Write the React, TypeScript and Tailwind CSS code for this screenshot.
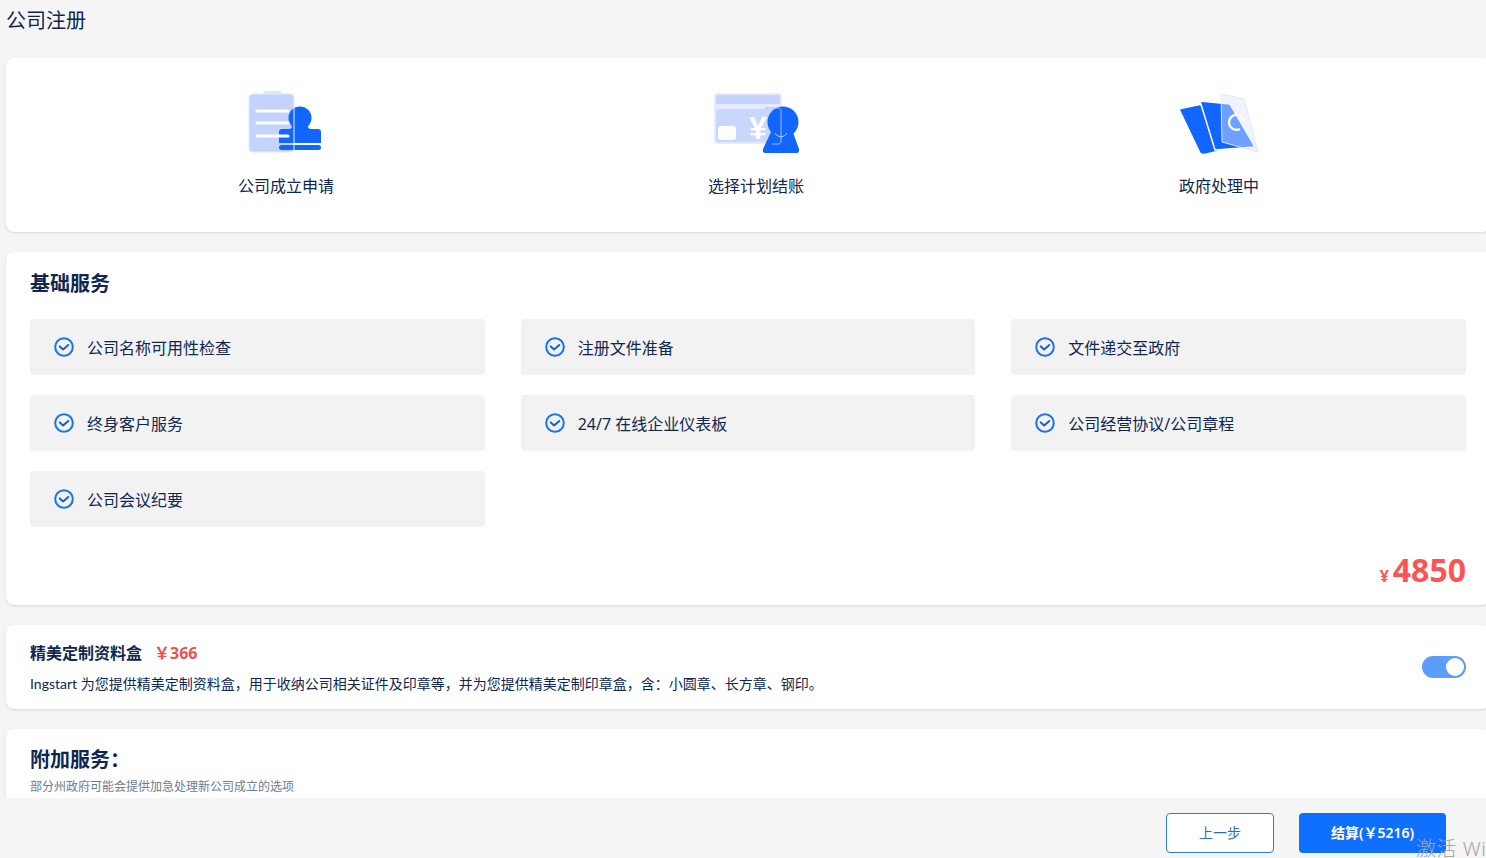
import { useState } from "react";

const basics = [
  "公司名称可用性检查",
  "注册文件准备",
  "文件递交至政府",
  "终身客户服务",
  "24/7 在线企业仪表板",
  "公司经营协议/公司章程",
  "公司会议纪要",
];

const CheckIcon = () => (
  <svg width="20" height="20" viewBox="0 0 20 20" fill="none" className="shrink-0">
    <circle cx="10" cy="10" r="8.8" stroke="#1a73e8" strokeWidth="2" />
    <path d="M5.8 9.4l3.3 3 5.2-4.4" stroke="#1d5fbf" strokeWidth="2" strokeLinecap="round" strokeLinejoin="round" />
  </svg>
);

const ApplyIcon = () => (
  <svg width="80" height="66" viewBox="0 0 80 66">
    <rect x="17" y="1" width="19" height="6" rx="3" fill="#dbe4ff" />
    <rect x="3" y="4" width="45" height="58" rx="4" fill="#c3d3fd" stroke="#e2e9ff" />
    <circle cx="54" cy="28" r="11.500" fill="#1166ff" />
    <path d="M46 33h16v3c0 2 1 3 3 3h7c2 0 3 1 3 3v11H33V42c0-2 1-3 3-3h7c2 0 3-1 3-3z" fill="#1166ff" />
    <rect x="33" y="55" width="42" height="5" rx="2.500" fill="#1166ff" />
    <path d="M48 16v44" stroke="#e8eeff" strokeWidth="1" />
    <path d="M11 21h31M11 33h31M11 46h31" stroke="#fff" strokeWidth="3" strokeLinecap="round" />
  </svg>
);

const PlanIcon = () => (
  <svg width="90" height="66" viewBox="0 0 90 66">
    <rect x="3" y="3" width="68" height="51" rx="4" fill="#e4eaff" />
    <rect x="5" y="5" width="64" height="9" rx="2" fill="#c3d3fd" />
    <rect x="5" y="19" width="64" height="33" rx="2" fill="#c9d7fe" />
    <rect x="7" y="36" width="18" height="14" rx="3" fill="#fff" />
    <circle cx="72" cy="32" r="15.500" fill="#1166ff" />
    <path d="M60 42h22l2 6 4 11c.5 2-.5 4-2 4H54c-2 0-2.500-2-2-4z" fill="#1166ff" />
    <text x="38" y="49" fontSize="32" fontWeight="700" fill="#fff" fontFamily="Liberation Sans, sans-serif">¥</text>
    <path d="M54 18h13c2 0 3 1 3 3v30c0 2-1 3-3 3h-6" stroke="#9dbbff" strokeWidth="1" fill="none" />
    <path d="M64 43c3 5 9 5 12 0" stroke="#cfdcff" strokeWidth="1" fill="none" />
  </svg>
);

const GovIcon = () => (
  <svg width="80" height="66" viewBox="0 0 80 66">
    <path d="M2 20l19-4 17 44-13 3c-1 0-2 0-3-1z" fill="#1166ff" stroke="#1166ff" strokeWidth="1.500" strokeLinejoin="round" />
    <path d="M21 11l30 3 25 43-40 3z" fill="#1166ff" stroke="#fff" strokeWidth="1.500" strokeLinejoin="round" />
    <path d="M42 4l23 5 14 53-36-10z" fill="#dfe7ff" fillOpacity="0.45" stroke="#e0e8ff" strokeWidth="1" />
    <path d="M59 25a7.500 7.500 0 1 0 2 14" stroke="#fff" strokeWidth="2.200" fill="none" />
    <path d="M62 26l3 5.500-1 6" stroke="#fff" strokeWidth="1.800" strokeDasharray="1.500 1.500" fill="none" />
  </svg>
);

const steps = [
  { label: "公司成立申请", icon: <ApplyIcon /> },
  { label: "选择计划结账", icon: <PlanIcon /> },
  { label: "政府处理中", icon: <GovIcon /> },
];

export default function App() {
  const [boxOn, setBoxOn] = useState(true);

  return (
    <div
      className="h-[858px] w-[1486px] overflow-hidden bg-[#f5f5f5] text-[#0f2750] relative"
      style={{ fontFamily: '"Noto Sans", "Noto Sans CJK SC", sans-serif' }}
    >
      <div className="h-[798px] overflow-hidden">
        <div className="h-[58px] pl-[6px] pt-[8px] text-[20px] leading-[26px]">公司注册</div>

        <div className="ml-[6px] w-[1484px] flex flex-col gap-5">
          <div className="h-[174px] bg-white rounded-lg shadow-sm px-[45px] flex justify-around">
            {steps.map((s) => (
              <div key={s.label} className="flex flex-col items-center pt-[32px] last:translate-x-px">
                <div className="h-[66px] flex items-center justify-center">{s.icon}</div>
                <div className="mt-[18px] text-base leading-[24px]">{s.label}</div>
              </div>
            ))}
          </div>

          <div className="h-[353px] bg-white rounded-lg shadow-sm px-6 pt-[18px]">
            <h2 className="text-[20px] leading-[28px] font-bold">基础服务</h2>
            <div className="mt-[21px] grid grid-cols-3 gap-x-9 gap-y-5">
              {basics.map((b) => (
                <div key={b} className="h-14 bg-[#f2f2f2] rounded flex items-center gap-[13px] px-6 text-base">
                  <CheckIcon />
                  <span className="pt-[2px]">{b}</span>
                </div>
              ))}
            </div>
            <div className="mt-[21px] flex items-baseline justify-end text-[#ff5252] font-bold">
              <span className="text-base mr-[4px]">¥</span>
              <span className="text-[32px] leading-[44px]">4850</span>
            </div>
          </div>

          <div className="h-[84px] bg-white rounded-lg shadow-sm px-6 flex items-center justify-between">
            <div>
              <div className="flex items-center text-base leading-[24px] font-bold -mt-[1px]">
                精美定制资料盒
                <span className="ml-3 text-[#f04f4f]">￥366</span>
              </div>
              <p className="mt-[9px] -mb-[1px] text-sm leading-[20px]" style={{ fontFamily: 'Lato, "Noto Sans CJK SC", sans-serif' }}>
                Ingstart 为您提供精美定制资料盒，用于收纳公司相关证件及印章等，并为您提供精美定制印章盒，含：小圆章、长方章、钢印。
              </p>
            </div>
            <button
              onClick={() => setBoxOn(!boxOn)}
              className="h-[22px] w-11 rounded-full bg-[#5c9dfa] flex items-center justify-end px-[2px]"
            >
              <span className="size-[18px] rounded-full bg-white" />
            </button>
          </div>

          <div className="h-[120px] bg-white rounded-lg shadow-sm px-6 pt-4">
            <h2 className="text-[20px] leading-[30px] font-bold">附加服务：</h2>
            <p className="mt-[2px] text-xs leading-[20px] text-[#6b7c96]">部分州政府可能会提供加急处理新公司成立的选项</p>
          </div>
        </div>
      </div>

      <div className="h-[60px] flex justify-end items-start gap-[25px] pt-[15px] pr-10">
        <button className="w-[108px] h-10 bg-white border border-[#2f7bd8] rounded text-sm text-[#2f6fc0]">上一步</button>
        <button className="w-[147px] h-10 bg-[#0f6fff] rounded text-sm font-semibold text-white">结算(￥5216)</button>
      </div>

      <div className="absolute left-[1416px] top-[835px] text-[20px] leading-[28px] text-[#a8a8a8] font-light whitespace-nowrap tracking-[0.5px]">激活 Windows</div>
    </div>
  );
}
